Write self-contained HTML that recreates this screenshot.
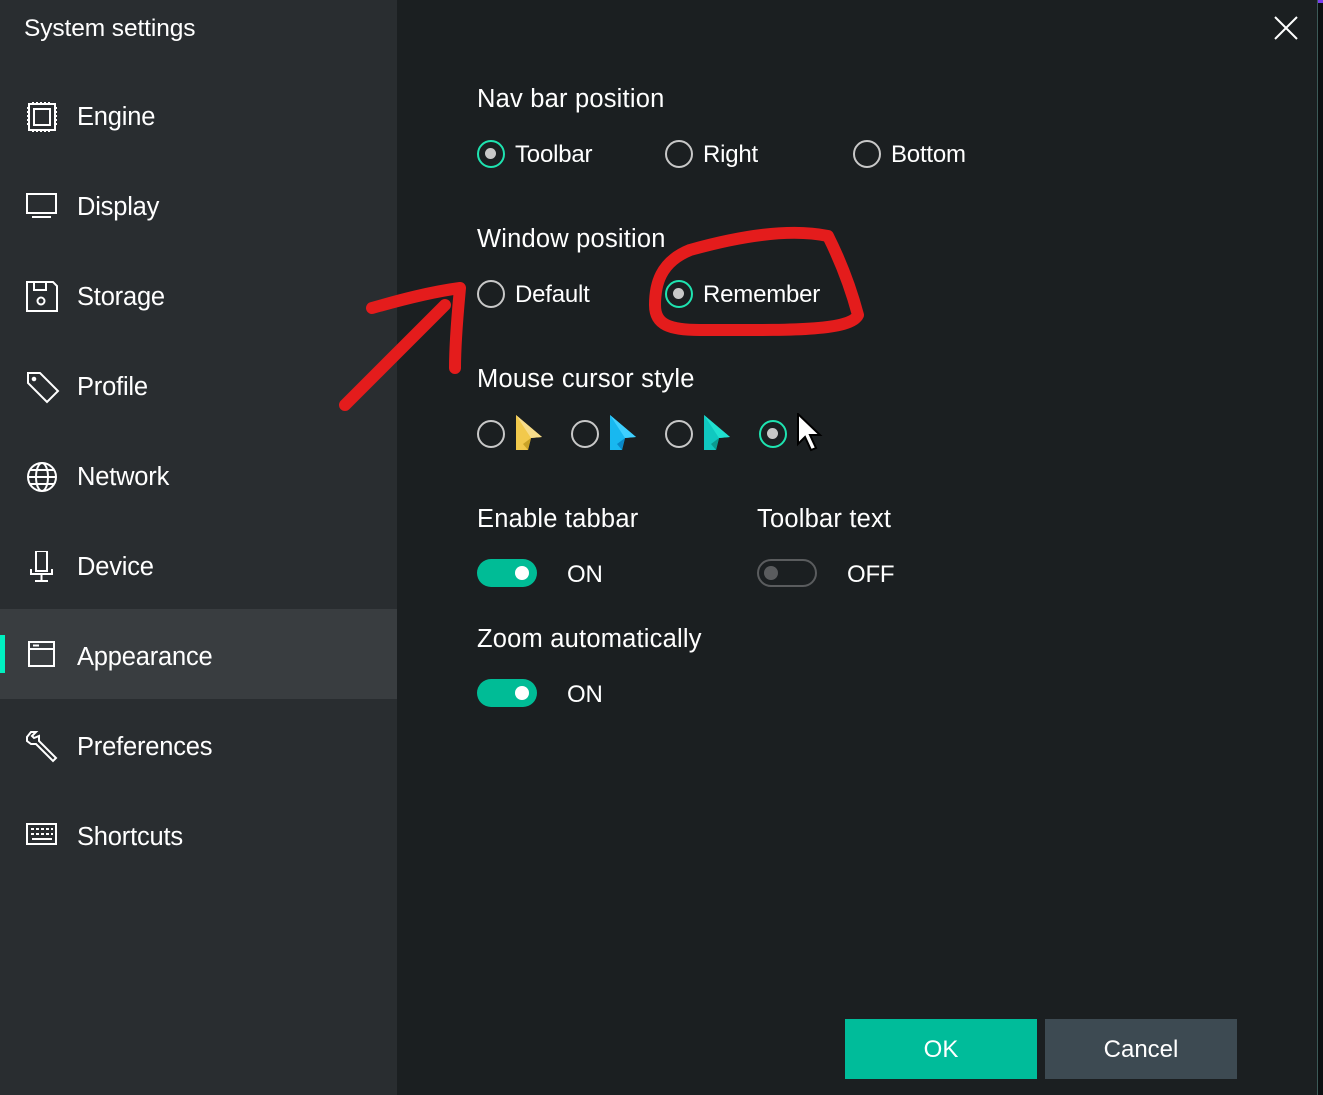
<!DOCTYPE html>
<html><head><style>
*{margin:0;padding:0;box-sizing:border-box}
body{width:1323px;height:1095px;background:#1b1f21;font-family:"Liberation Sans",sans-serif;color:#fff;position:relative;overflow:hidden}
.side{position:absolute;left:0;top:0;width:397px;height:1095px;background:#292d30}
.t{position:absolute;white-space:nowrap;line-height:1}
.nav{position:absolute;left:0;width:397px;height:90px}
.nav .l{position:absolute;left:77px;top:32px;font-size:25.5px;letter-spacing:-0.2px}
.nav svg{position:absolute;left:26px;top:30px}
.sel{background:#393d40}
.bar{position:absolute;left:0;top:26px;width:5px;height:38px;background:#00f0c0}
.r{position:absolute;width:28px;height:28px;border-radius:50%;border:2.5px solid #c8c8c8}
.r.on{border-color:#1ee3b0}
.r.on::after{content:"";position:absolute;left:6px;top:6px;width:11px;height:11px;border-radius:50%;background:#c8c8c8}
.h{font-size:25.5px;letter-spacing:0.2px}
.o{font-size:24px;letter-spacing:-0.2px}
.tg{position:absolute;width:60px;height:28px;border-radius:14px}
.tg.on{background:#00bc96}
.tg.on::after{content:"";position:absolute;right:8px;top:7px;width:14px;height:14px;border-radius:50%;background:#fff}
.tg.off{border:2.5px solid #5a5c5e}
.tg.off::after{content:"";position:absolute;left:5px;top:5px;width:14px;height:14px;border-radius:50%;background:#5a5c5e}
.btn{position:absolute;top:1019px;width:192px;height:60px;font-size:24px;text-align:center;line-height:62px}
</style></head><body>
<div class="side">
<div class="t" style="left:24px;top:17px;font-size:24.5px;letter-spacing:-0.1px">System settings</div>
<div class="nav" style="top:71px"><svg width="32" height="32" viewBox="0 0 32 32" fill="none" stroke="#fff" stroke-width="2"><rect x="3" y="3" width="26" height="26"/><rect x="8" y="8" width="16" height="16"/><path d="M1 7h2M1 11h2M1 15h2M1 19h2M1 23h2M29 7h2M29 11h2M29 15h2M29 19h2M29 23h2M7 1v2M11 1v2M15 1v2M19 1v2M23 1v2M7 29v2M11 29v2M15 29v2M19 29v2M23 29v2"/></svg><div class="l">Engine</div></div>
<div class="nav" style="top:161px"><svg width="32" height="32" viewBox="0 0 32 32" fill="none" stroke="#fff" stroke-width="2"><rect x="1" y="3" width="29" height="19"/><path d="M6 26h19"/></svg><div class="l">Display</div></div>
<div class="nav" style="top:251px"><svg width="32" height="32" viewBox="0 0 32 32" fill="none" stroke="#fff" stroke-width="2"><path d="M1 1h26l4 4v25H1z"/><path d="M8 1v8h12V1"/><circle cx="15" cy="20" r="3.5"/></svg><div class="l">Storage</div></div>
<div class="nav" style="top:341px"><svg width="34" height="34" viewBox="0 0 34 34" fill="none" stroke="#fff" stroke-width="2"><path d="M2 2h12l18 18-11 11L2 12z"/><circle cx="8" cy="8" r="1.3" fill="#fff"/></svg><div class="l">Profile</div></div>
<div class="nav" style="top:431px"><svg width="32" height="32" viewBox="0 0 32 32" fill="none" stroke="#fff" stroke-width="2"><circle cx="16" cy="16" r="14"/><ellipse cx="16" cy="16" rx="6" ry="14"/><path d="M2 16h28M4 9h24M4 23h24"/></svg><div class="l">Network</div></div>
<div class="nav" style="top:521px"><svg width="32" height="32" viewBox="0 0 32 32" fill="none" stroke="#fff" stroke-width="2"><rect x="10" y="0" width="11" height="20"/><path d="M5 18v5h21v-5M15.5 23v6M9 30h13"/></svg><div class="l">Device</div></div>
<div class="nav sel" style="top:609px"><div class="bar"></div><svg width="32" height="32" viewBox="0 0 32 32" fill="none" stroke="#fff" stroke-width="2" style="top:32px"><rect x="3" y="1" width="25" height="24"/><path d="M3 8h25M7 4.5h6"/></svg><div class="l" style="top:34px">Appearance</div></div>
<div class="nav" style="top:701px"><svg width="32" height="32" viewBox="0 0 32 32" fill="none" stroke="#fff" stroke-width="2"><path d="M10 1L5 1 1 6 1 10 5 13 10 13 27 30 30 27 13 10 13 5 8 7 6 5z"/></svg><div class="l">Preferences</div></div>
<div class="nav" style="top:791px"><svg width="32" height="32" viewBox="0 0 32 32" fill="none" stroke="#fff" stroke-width="2"><rect x="1" y="3" width="29" height="20"/><path d="M5 8h3M10 8h3M15 8h3M20 8h3M25 8h2M5 13h3M10 13h3M15 13h3M20 13h3M25 13h2M6 18h20"/></svg><div class="l">Shortcuts</div></div>
</div>
<div style="position:absolute;left:1317px;top:0;width:6px;height:1095px;background:#0c0f11;border-left:1px solid #3d5a58"></div>
<div style="position:absolute;left:1318px;top:0;width:5px;height:3px;background:#7b3ff2"></div>
<svg style="position:absolute;left:1274px;top:16px" width="24" height="24" viewBox="0 0 24 24" stroke="#fff" stroke-width="2"><path d="M1 1l22 22M23 1L1 23"/></svg>

<div class="t h" style="left:477px;top:87px">Nav bar position</div>
<div class="r on" style="left:477px;top:140px"></div><div class="t o" style="left:515px;top:143px">Toolbar</div>
<div class="r" style="left:665px;top:140px"></div><div class="t o" style="left:703px;top:143px">Right</div>
<div class="r" style="left:853px;top:140px"></div><div class="t o" style="left:891px;top:143px">Bottom</div>

<div class="t h" style="left:477px;top:227px">Window position</div>
<div class="r" style="left:477px;top:280px"></div><div class="t o" style="left:515px;top:283px">Default</div>
<div class="r on" style="left:665px;top:280px"></div><div class="t o" style="left:703px;top:283px">Remember</div>

<div class="t h" style="left:477px;top:367px">Mouse cursor style</div>
<div class="r" style="left:477px;top:420px"></div>
<svg style="position:absolute;left:514px;top:414px" width="30" height="38" viewBox="0 0 30 38"><path d="M2 1L28 23 17 24 14 36 2 36z" fill="#f2c94c"/><path d="M2 1L28 23 17 24z" fill="#f7dc8a"/><path d="M17 24l-3 12-5-6z" fill="#c9a227"/></svg>
<div class="r" style="left:571px;top:420px"></div>
<svg style="position:absolute;left:608px;top:414px" width="30" height="38" viewBox="0 0 30 38"><path d="M2 1L28 23 17 24 14 36 2 36z" fill="#18b8f0"/><path d="M2 1L28 23 17 24z" fill="#3fd0ff"/><path d="M17 24l-3 12-5-6z" fill="#0a88c8"/></svg>
<div class="r" style="left:665px;top:420px"></div>
<svg style="position:absolute;left:702px;top:414px" width="30" height="38" viewBox="0 0 30 38"><path d="M2 1L28 23 17 24 14 36 2 36z" fill="#10c8c0"/><path d="M2 1L28 23 17 24z" fill="#20e0d0"/><path d="M17 24l-3 12-5-6z" fill="#0a9c90"/></svg>
<div class="r on" style="left:759px;top:420px"></div>
<svg style="position:absolute;left:796px;top:413px" width="30" height="40" viewBox="0 0 30 40"><path d="M2 1v30l7-7 6 13 5-2-6-13h10z" fill="#fff" stroke="#000" stroke-width="2"/></svg>

<div class="t h" style="left:477px;top:507px">Enable tabbar</div>
<div class="tg on" style="left:477px;top:559px"></div><div class="t o" style="left:567px;top:563px">ON</div>
<div class="t h" style="left:757px;top:507px">Toolbar text</div>
<div class="tg off" style="left:757px;top:559px"></div><div class="t o" style="left:847px;top:563px">OFF</div>

<div class="t h" style="left:477px;top:627px">Zoom automatically</div>
<div class="tg on" style="left:477px;top:679px"></div><div class="t o" style="left:567px;top:683px">ON</div>

<div class="btn" style="left:845px;background:#00bc9a">OK</div>
<div class="btn" style="left:1045px;background:#3d4a52">Cancel</div>

<svg style="position:absolute;left:0;top:0" width="1323" height="1095" fill="none" stroke="#e41c1c" stroke-width="12" stroke-linecap="round" stroke-linejoin="round">
<path d="M345 405L445 305M372 308C400 300 430 292 460 288M460 288C458 310 455 340 455 368"/>
<path d="M690 250C740 236 790 228 828 236C840 260 850 285 858 315C850 332 780 330 700 330C670 330 655 325 655 305C655 285 660 262 690 250"/>
</svg>
</body></html>
